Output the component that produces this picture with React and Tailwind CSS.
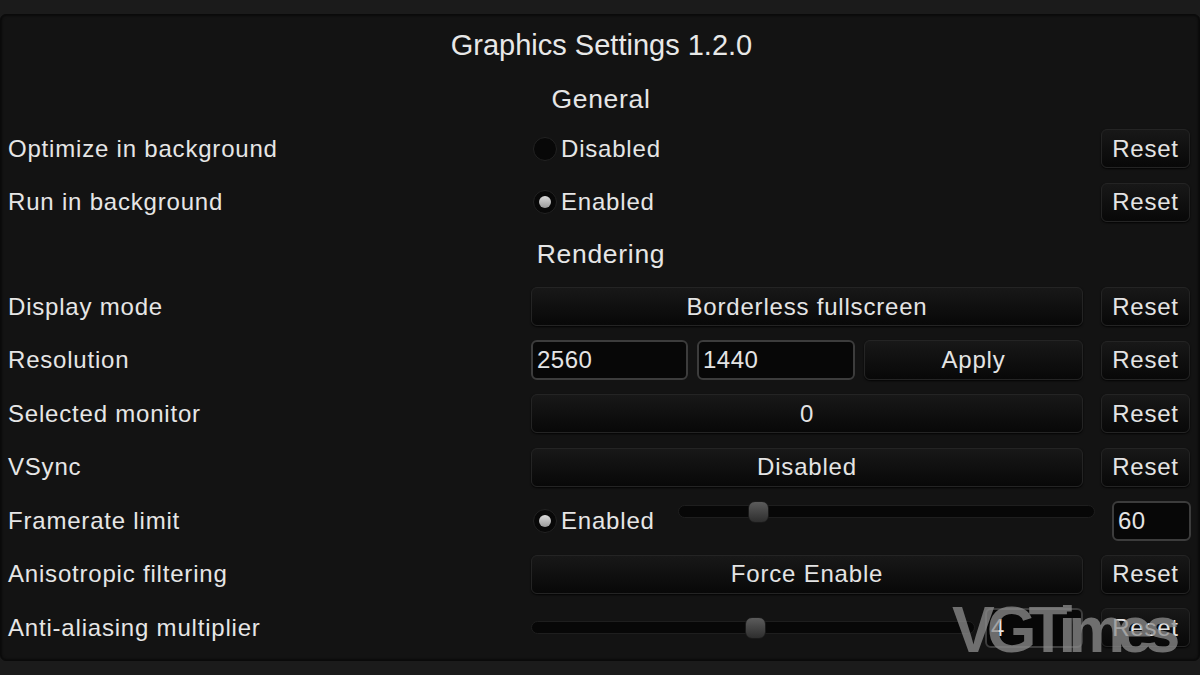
const font = { fontFamily: '"Liberation Sans", Arial, sans-serif' };

const Button = ({ children, className = '' }) => (
  <div
    className={`flex h-[39px] items-center justify-center rounded-[6px] border border-[#242424] bg-gradient-to-b from-[#181818] to-[#080808] text-[24px] tracking-[0.8px] text-[#e4e4e4] shadow-[0_1px_2px_rgba(0,0,0,0.8)] ${className}`}
  >
    {children}
  </div>
);

const Input = ({ value, className = '' }) => (
  <div
    className={`flex h-[40px] items-center rounded-[6px] border-2 border-[#3c3c3c] bg-[#070707] pl-[4px] text-[24px] tracking-[0.5px] text-[#e4e4e4] ${className}`}
  >
    {value}
  </div>
);

const Toggle = ({ on, label }) => (
  <div className="flex items-center gap-[4px] pl-[2px]">
    <div className="flex h-[24px] w-[24px] items-center justify-center rounded-full border border-[#222] bg-[#080808]">
      {on && <div className="h-[12px] w-[12px] rounded-full bg-gradient-to-b from-[#dcdcdc] to-[#9a9a9a]" />}
    </div>
    <span className="text-[24px] tracking-[0.8px] text-[#e6e6e6]">{label}</span>
  </div>
);

const Slider = ({ pos, className = '' }) => (
  <div className={`relative h-[13px] rounded-full border border-[#1e1e1e] bg-[#070707] ${className}`}>
    <div
      className="absolute top-1/2 h-[22px] w-[21px] -translate-y-1/2 rounded-[7px] border border-[#1a1a1a] bg-gradient-to-b from-[#5c5c5c] to-[#2e2e2e]"
      style={{ left: pos }}
    />
  </div>
);

const Row = ({ label, children }) => (
  <div className="flex h-[53.5px] items-center">
    <div className="w-[523px] text-[24px] tracking-[0.8px] text-[#e6e6e6]">{label}</div>
    {children}
  </div>
);

const Reset = () => <Button className="ml-[18px] w-[89px]">Reset</Button>;

const Header = ({ children, h }) => (
  <div className={`flex items-center justify-center pr-[5px] text-[26.5px] tracking-[0.7px] text-[#e6e6e6] ${h}`}>
    {children}
  </div>
);

export default function App() {
  return (
    <div className="relative h-[675px] w-[1200px] overflow-hidden bg-[#1b1b1b] pt-[14px]" style={font}>
      <div className="h-[647px] rounded-[6px] border border-[#0a0a0a] bg-[#131313] pl-[7px] shadow-[inset_0_0_3px_rgba(0,0,0,0.9)]">
        <div className="flex h-[62px] items-center justify-center pr-[4px] text-[29px] text-[#e8e8e8]">
          Graphics Settings 1.2.0
        </div>
        <Header h="h-[45px]">General</Header>
        <Row label="Optimize in background">
          <div className="w-[552px]"><Toggle on={false} label="Disabled" /></div>
          <Reset />
        </Row>
        <Row label="Run in background">
          <div className="w-[552px]"><Toggle on label="Enabled" /></div>
          <Reset />
        </Row>
        <Header h="h-[51px]">Rendering</Header>
        <Row label="Display mode">
          <Button className="w-[552px]">Borderless fullscreen</Button>
          <Reset />
        </Row>
        <Row label="Resolution">
          <div className="flex w-[552px] gap-[9px]">
            <Input value="2560" className="w-[157px]" />
            <Input value="1440" className="w-[158px]" />
            <Button className="h-[40px] flex-1">Apply</Button>
          </div>
          <Reset />
        </Row>
        <Row label="Selected monitor">
          <Button className="w-[552px]">0</Button>
          <Reset />
        </Row>
        <Row label="VSync">
          <Button className="w-[552px]">Disabled</Button>
          <Reset />
        </Row>
        <Row label="Framerate limit">
          <div className="w-[147px]"><Toggle on label="Enabled" /></div>
          <Slider pos="69px" className="mb-[18px] w-[417px]" />
          <Input value="60" className="ml-[17px] w-[79px]" />
        </Row>
        <Row label="Anisotropic filtering">
          <Button className="w-[552px]">Force Enable</Button>
          <Reset />
        </Row>
        <Row label="Anti-aliasing multiplier">
          <div className="flex w-[552px] items-center gap-[10px]">
            <Slider pos="213px" className="w-[444px]" />
            <Input value="4" className="h-[38px] flex-1" />
          </div>
          <Reset />
        </Row>
      </div>
      <div className="pointer-events-none absolute left-[952px] top-[582px] text-[64px] font-bold tracking-[-8px] text-[#8e8e8e] opacity-75">
        VGTimes
      </div>
    </div>
  );
}
